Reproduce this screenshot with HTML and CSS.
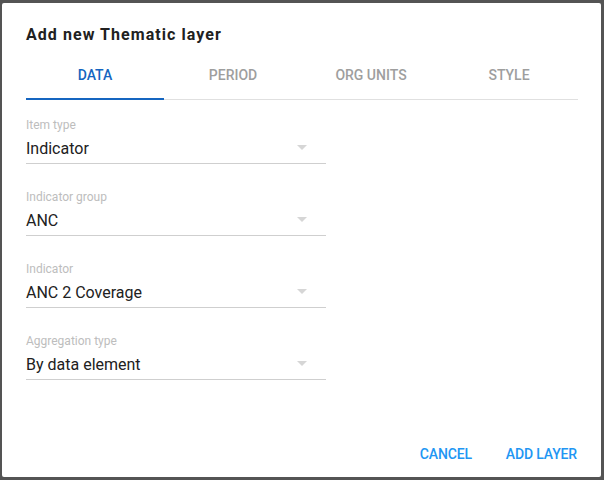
FILE: index.html
```html
<!DOCTYPE html>
<html>
<head>
<meta charset="utf-8">
<link rel="stylesheet" href="styles.css">
</head>
<body>
<div class="dialog">
  <h3 class="title">Add new Thematic layer</h3>
  <div class="tabs">
    <div class="tab active">DATA</div>
    <div class="tab">PERIOD</div>
    <div class="tab">ORG UNITS</div>
    <div class="tab">STYLE</div>
  </div>
  <div class="content">
    <div class="field">
      <div class="label">Item type</div>
      <div class="value"><span>Indicator</span><svg class="arrow" viewBox="0 0 24 24" width="24" height="24"><path d="M7 10l5 5 5-5z"/></svg></div>
    </div>
    <div class="field">
      <div class="label">Indicator group</div>
      <div class="value"><span>ANC</span><svg class="arrow" viewBox="0 0 24 24" width="24" height="24"><path d="M7 10l5 5 5-5z"/></svg></div>
    </div>
    <div class="field">
      <div class="label">Indicator</div>
      <div class="value"><span>ANC 2 Coverage</span><svg class="arrow" viewBox="0 0 24 24" width="24" height="24"><path d="M7 10l5 5 5-5z"/></svg></div>
    </div>
    <div class="field">
      <div class="label">Aggregation type</div>
      <div class="value"><span>By data element</span><svg class="arrow" viewBox="0 0 24 24" width="24" height="24"><path d="M7 10l5 5 5-5z"/></svg></div>
    </div>
  </div>
  <div class="actions">
    <button class="btn">CANCEL</button>
    <button class="btn">ADD LAYER</button>
  </div>
</div>
</body>
</html>
```

FILE: styles.css
```css
html, body {
  margin: 0;
  padding: 0;
  height: 100%;
}
body {
  background: #545454;
  font-family: Roboto, "Liberation Sans", sans-serif;
  padding: 3px 0 0 2px;
  box-sizing: border-box;
}
.dialog {
  width: 599px;
  height: 474px;
  background: #fff;
  border-radius: 2px;
  box-sizing: border-box;
  padding: 20px 23px 0 24px;
  display: flex;
  flex-direction: column;
}
.title {
  margin: 0;
  font-size: 16px;
  line-height: 24px;
  font-weight: 700;
  color: #212121;
  letter-spacing: 1.05px;
}
.tabs {
  margin-top: 4px;
  display: flex;
  border-bottom: 1px solid #e0e0e0;
  width: 552px;
}
.tab {
  flex: 1;
  height: 49px;
  margin-bottom: -1px;
  display: flex;
  align-items: center;
  justify-content: center;
  font-size: 14px;
  font-weight: 500;
  color: #9e9e9e;
  box-sizing: border-box;
  padding-bottom: 1px;
}
.tab.active {
  color: #1565c0;
  box-shadow: inset 0 -2px 0 #1565c0;
}
.content {
  padding-top: 17px;
  display: flex;
  flex-direction: column;
  gap: 25px;
}
.field {
  width: 300px;
  border-bottom: 1px solid #cfcfcf;
  padding-bottom: 2px;
}
.label {
  font-size: 12px;
  line-height: 16px;
  color: #bdbdbd;
}
.value {
  margin-top: 4px;
  display: flex;
  align-items: center;
  justify-content: space-between;
  font-size: 16px;
  line-height: 24px;
  color: #212121;
}
.arrow {
  fill: #d6d6d6;
  margin-right: 12px;
  margin-top: -5px;
}
.actions {
  margin-top: auto;
  margin-right: -15px;
  padding-bottom: 5px;
  display: flex;
  justify-content: flex-end;
  gap: 0;
}
.btn {
  height: 36px;
  min-width: 88px;
  padding: 0 16px;
  border: none;
  background: transparent;
  font-family: Roboto, "Liberation Sans", sans-serif;
  font-size: 14px;
  font-weight: 500;
  color: #2196f3;
  letter-spacing: -0.15px;
}
```
